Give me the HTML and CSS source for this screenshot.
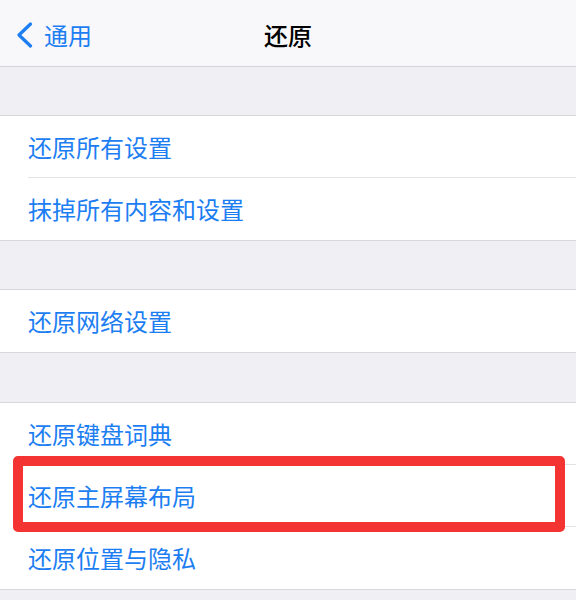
FILE: index.html
```html
<!DOCTYPE html>
<html lang="zh-CN">
<head>
<meta charset="utf-8">
<link rel="stylesheet" href="styles.css">
</head>
<body>
<div class="nav">
  <div class="back">
    <svg class="chev" width="18" height="26" viewBox="0 0 18 26"><polyline points="14.5,2 3,13 14.5,24" fill="none" stroke="#1c7ef2" stroke-width="3.2" stroke-linecap="round" stroke-linejoin="round"/></svg>
    <span class="back-text">通用</span>
  </div>
  <div class="title">还原</div>
</div>
<div class="gap"></div>
<div class="group">
  <div class="row"><div class="inner">还原所有设置</div></div>
  <div class="row"><div class="inner">抹掉所有内容和设置</div></div>
</div>
<div class="gap"></div>
<div class="group">
  <div class="row"><div class="inner">还原网络设置</div></div>
</div>
<div class="gap gap2"></div>
<div class="group">
  <div class="row"><div class="inner">还原键盘词典</div></div>
  <div class="row highlighted"><div class="inner">还原主屏幕布局</div><div class="mark"></div></div>
  <div class="row"><div class="inner">还原位置与隐私</div></div>
</div>
<div class="rest"></div>
</body>
</html>
```
FILE: styles.css
```css
* { box-sizing: border-box; }
html, body { margin: 0; padding: 0; }
body {
  width: 576px;
  height: 600px;
  overflow: hidden;
  background: #efeff4;
  font-family: "Noto Sans CJK SC", "Noto Sans", sans-serif;
}
.nav {
  height: 67px;
  background: #f8f8fa;
  border-bottom: 1px solid #d4d4d8;
  display: flex;
  align-items: center;
  justify-content: center;
  position: relative;
  padding-top: 4px;
}
.back {
  position: absolute;
  left: 16px;
  top: 4px;
  bottom: 0;
  display: flex;
  align-items: center;
  gap: 10px;
}
.chev { display: block; }
.back-text {
  font-size: 24px;
  color: #1c7ef2;
  line-height: 1;
}
.title {
  font-size: 24px;
  font-weight: 500;
  color: #000;
  line-height: 1;
}
.gap { height: 48px; }
.gap2 { height: 49px; }
.group {
  background: #fff;
  border-top: 1px solid #d8d8dc;
  border-bottom: 1px solid #d8d8dc;
}
.row {
  padding-left: 28px;
  position: relative;
}
.inner {
  height: 62px;
  display: flex;
  align-items: center;
  font-size: 24px;
  color: #1c7ef2;
  border-bottom: 1px solid #e2e2e6;
  padding-bottom: 1px;
}
.row:last-child .inner { border-bottom: none; }
.mark {
  position: absolute;
  top: -9px;
  bottom: -5px;
  left: 13px;
  right: 11px;
  border: 10px solid #f43333;
  border-radius: 5px;
}
```
